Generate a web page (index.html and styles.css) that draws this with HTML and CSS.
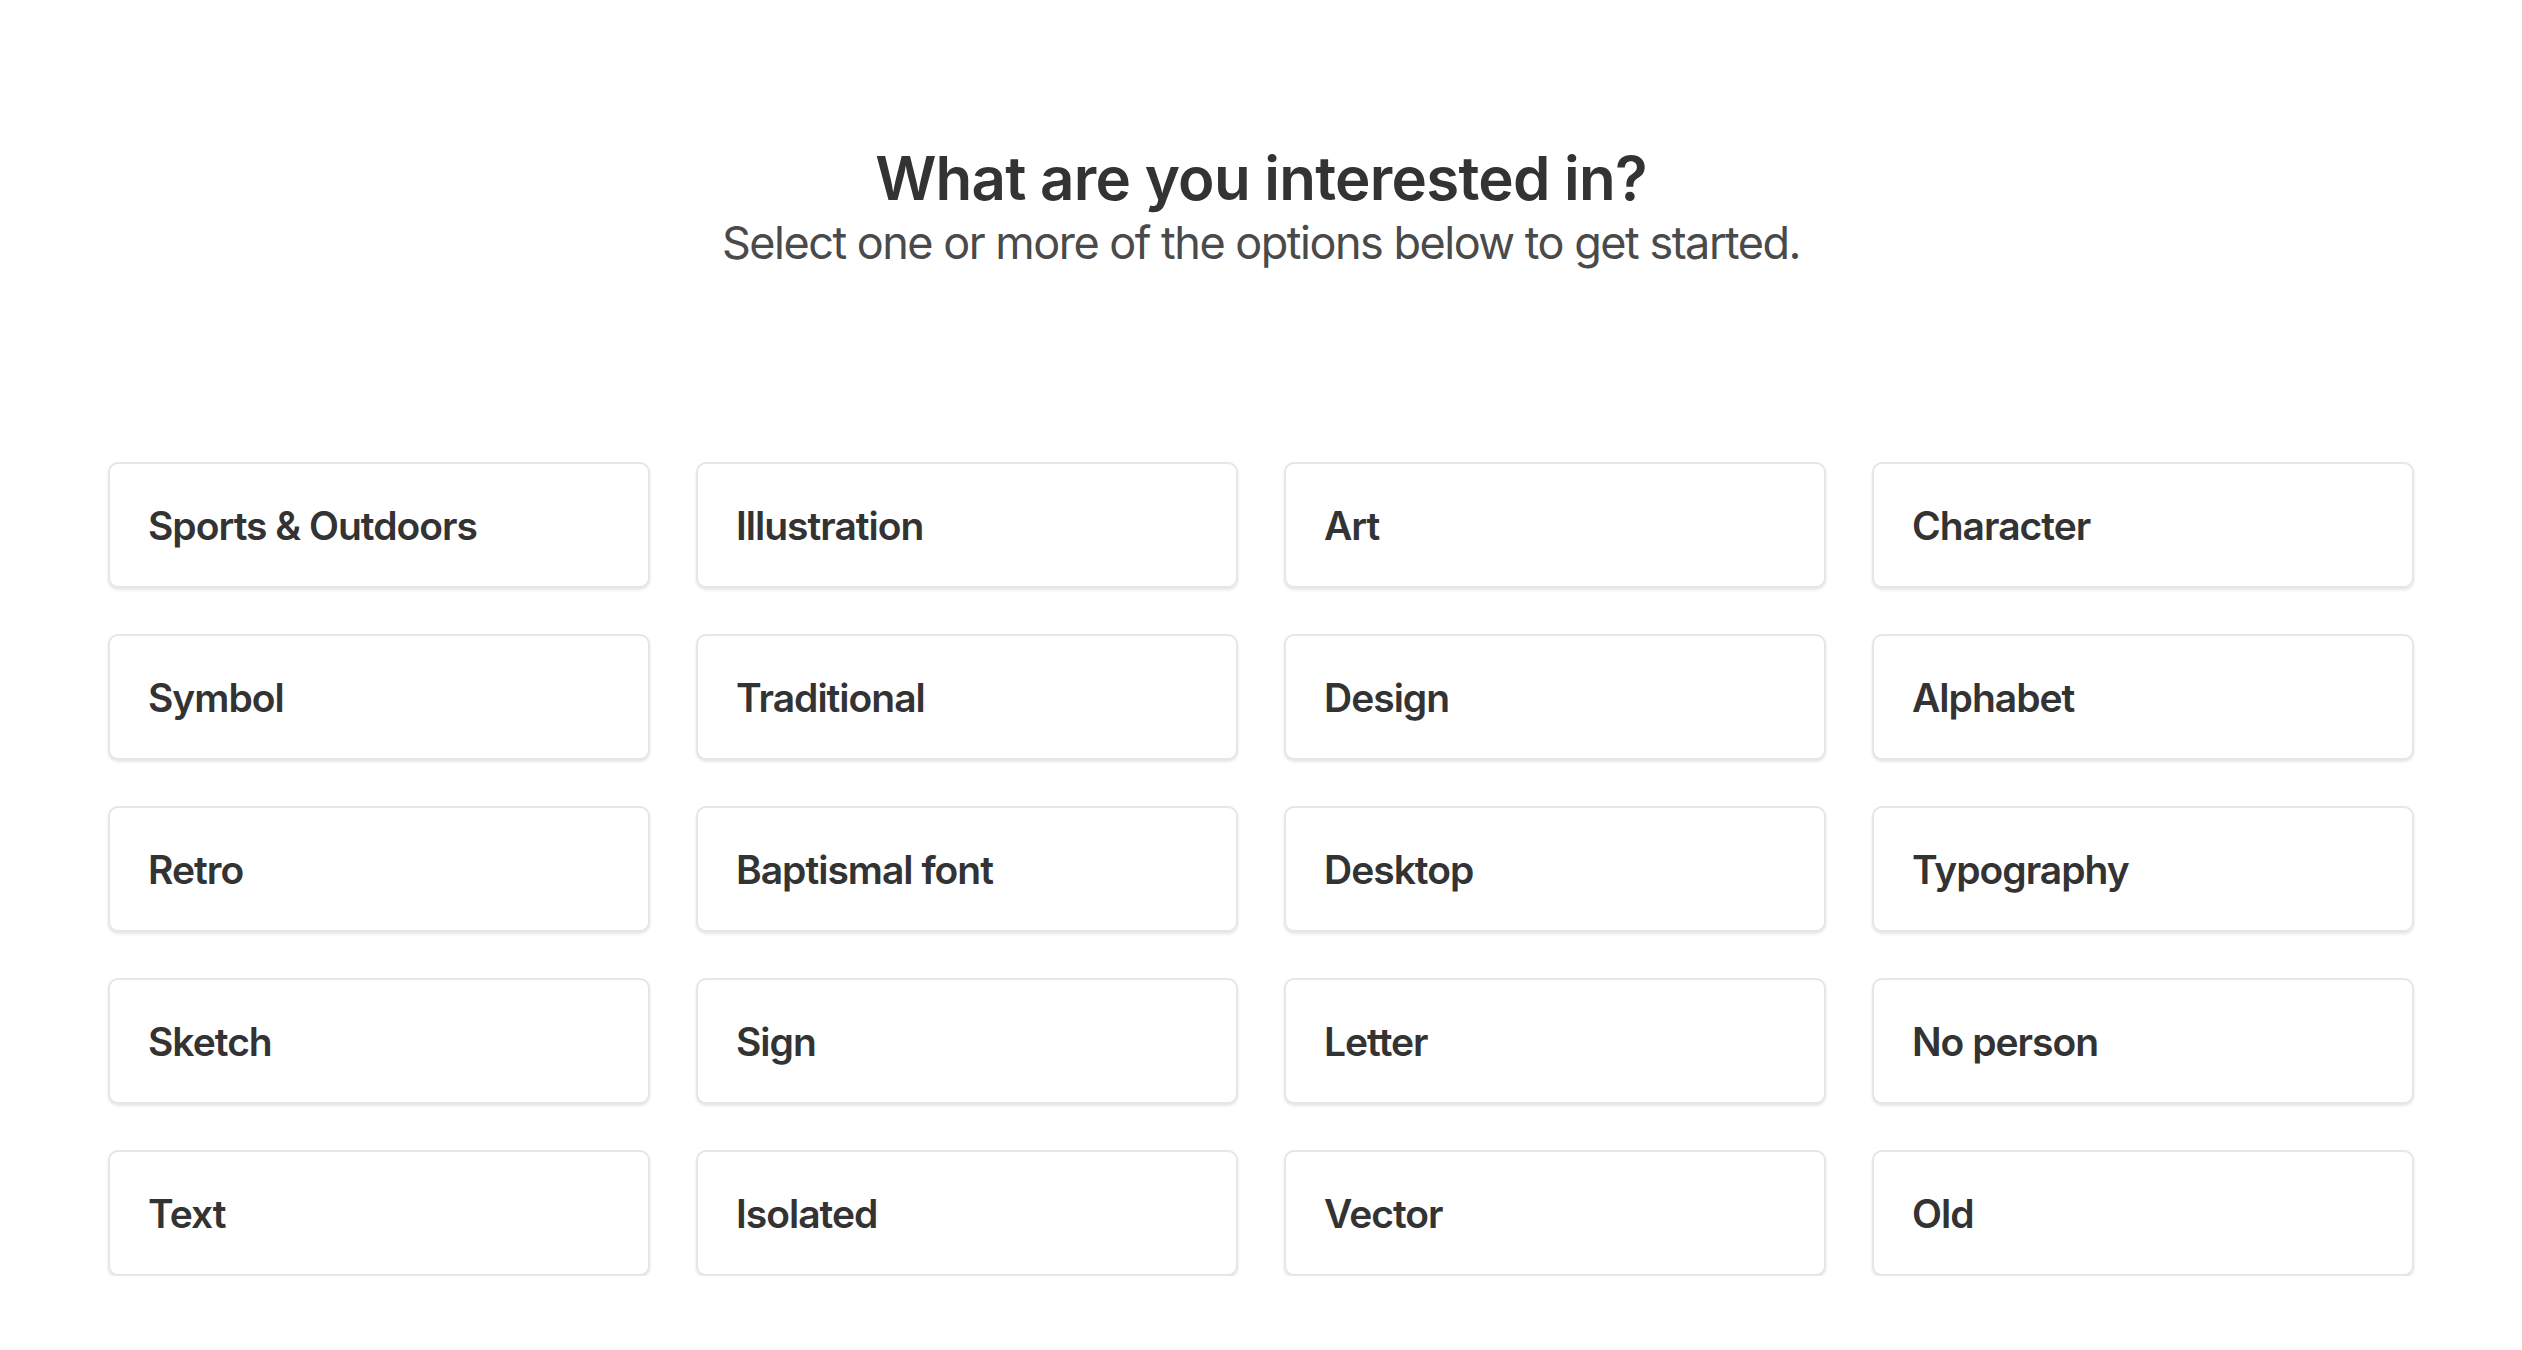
FILE: index.html
```html
<!DOCTYPE html>
<html lang="en">
<head>
<meta charset="utf-8">
<title>What are you interested in?</title>
<link rel="stylesheet" href="styles.css">
</head>
<body>
<main class="page">
  <header class="intro">
    <h1 class="title">What are you interested in?</h1>
    <p class="subtitle">Select one or more of the options below to get started.</p>
  </header>
  <section class="options">
    <div class="option">Sports &amp; Outdoors</div>
    <div class="option">Illustration</div>
    <div class="option">Art</div>
    <div class="option">Character</div>
    <div class="option">Symbol</div>
    <div class="option">Traditional</div>
    <div class="option">Design</div>
    <div class="option">Alphabet</div>
    <div class="option">Retro</div>
    <div class="option">Baptismal font</div>
    <div class="option">Desktop</div>
    <div class="option">Typography</div>
    <div class="option">Sketch</div>
    <div class="option">Sign</div>
    <div class="option">Letter</div>
    <div class="option">No person</div>
    <div class="option">Text</div>
    <div class="option">Isolated</div>
    <div class="option">Vector</div>
    <div class="option">Old</div>
  </section>
</main>
</body>
</html>
```

FILE: styles.css
```css
html, body {
  margin: 0;
  padding: 0;
  background: #ffffff;
}

body {
  font-family: Inter, "Noto Sans", "Liberation Sans", sans-serif;
  color: #333333;
}

.page {
  width: 2306px;
  margin: 0 auto;
  padding-top: 142px;
}

.intro {
  text-align: center;
}

.title {
  margin: 0;
  font-size: 60px;
  line-height: 72px;
  font-weight: 600;
  letter-spacing: -0.75px;
  color: #333333;
}

.subtitle {
  margin: 2px 0 0;
  font-size: 45px;
  line-height: 54px;
  font-weight: 400;
  letter-spacing: -1.5px;
  color: #4a4a4a;
}

.options {
  margin-top: 192px;
  display: grid;
  grid-template-columns: repeat(4, 1fr);
  column-gap: 46px;
  row-gap: 46px;
}

.option {
  box-sizing: border-box;
  height: 126px;
  display: flex;
  align-items: center;
  padding-left: 38px;
  background: #ffffff;
  border: 2px solid #e6e6e6;
  border-radius: 10px;
  box-shadow: 0 2px 3px rgba(0, 0, 0, 0.1);
  font-size: 39px;
  font-weight: 600;
  letter-spacing: -1px;
  color: #333333;
}
```
